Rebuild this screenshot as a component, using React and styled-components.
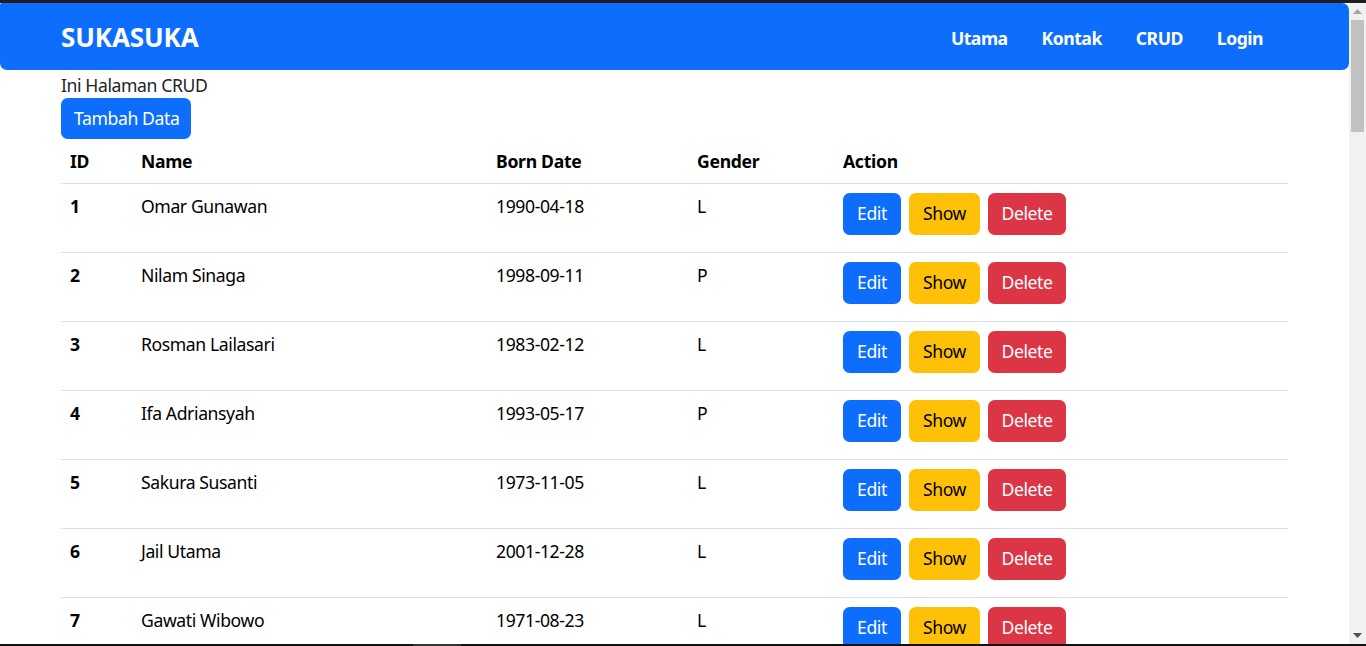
import React from "react";
import styled, { createGlobalStyle } from "styled-components";

const GlobalStyle = createGlobalStyle`
  html, body { margin: 0; padding: 0; }
  body {
    background: #141414;
    font-family: "Noto Sans", "Open Sans", sans-serif;
    overflow: hidden;
  }
  * { box-sizing: border-box; }
`;

const Frame = styled.div`
  width: 1366px;
  height: 646px;
  display: flex;
  flex-direction: column;
  background: #141414;
`;

const TopEdge = styled.div`
  height: 3px;
  background: #1e1e1e;
  flex: none;
`;

const Middle = styled.div`
  display: flex;
  height: 641px;
  flex: none;
`;

const Viewport = styled.div`
  flex: 1;
  background: #fff;
  overflow: hidden;
  color: #212529;
  font-size: 17.6px;
  line-height: 1.5;
`;

const ScrollTrack = styled.div`
  width: 17px;
  background: #f1f1f1;
  display: flex;
  flex-direction: column;
  align-items: center;
`;

const Arrow = styled.div`
  width: 17px;
  height: 17px;
  display: flex;
  align-items: center;
  justify-content: center;
  flex: none;
`;

const Thumb = styled.div`
  width: 13px;
  height: 112px;
  background: #c1c1c1;
  flex: none;
`;

const Spacer = styled.div`
  flex: 1;
`;

const BottomEdge = styled.div`
  height: 2px;
  background: #111;
  display: flex;
  flex: none;
`;

const EdgeSegment = styled.div`
  margin-left: 413px;
  width: 48px;
  background: #353535;
`;

const Navbar = styled.nav`
  height: 67px;
  background: #0d6efd;
  border-radius: 2px 7px 7px 7px;
  display: flex;
  align-items: center;
  justify-content: space-between;
  padding: 3px 86px 0 61px;
`;

const Brand = styled.a`
  color: #fff;
  font-weight: 700;
  font-size: 26px;
  letter-spacing: -0.1px;
  text-decoration: none;
  line-height: 1;
  margin-top: -2px;
`;

const NavList = styled.div`
  display: flex;
  gap: 34px;
`;

const NavLink = styled.a`
  color: #fff;
  font-weight: 700;
  font-size: 17.6px;
  text-decoration: none;
  letter-spacing: -0.5px;
`;

const Content = styled.main`
  padding: 3px 0 0 61px;
`;

const Intro = styled.p`
  margin: 0;
  line-height: 25px;
  letter-spacing: -0.4px;
`;

const Button = styled.button`
  font-family: inherit;
  font-size: 17.6px;
  line-height: 1;
  height: 42px;
  min-width: ${(p) => p.$w || 0}px;
  padding: 0 13px;
  border: none;
  border-radius: 6.6px;
  letter-spacing: -0.4px;
  white-space: nowrap;
  cursor: pointer;
  background: ${(p) =>
    p.$variant === "warning" ? "#ffc107" : p.$variant === "danger" ? "#dc3545" : "#0d6efd"};
  color: ${(p) => (p.$variant === "warning" ? "#000" : "#fff")};
`;

const AddButton = styled(Button)`
  height: 41px;
  width: 130px;
`;

const Table = styled.table`
  width: 1227px;
  margin-top: 1px;
  border-collapse: collapse;
  color: #000;
  table-layout: fixed;
`;

const HeadCell = styled.th`
  text-align: left;
  font-weight: 700;
  padding: 8px 9px 9px;
  line-height: 26px;
  border-bottom: 1px solid #dee2e6;
  width: ${(p) => p.$w}px;
  letter-spacing: -0.3px;
`;

const Row = styled.tr`
  border-bottom: 1px solid #dee2e6;
`;

const Cell = styled.td`
  padding: 9px 9px 17px;
  vertical-align: top;
  line-height: 26px;
  font-weight: ${(p) => (p.$bold ? 700 : 400)};
  letter-spacing: -0.4px;
`;

const Actions = styled.div`
  display: flex;
  gap: 8px;
`;

const rows = [
  [1, "Omar Gunawan", "1990-04-18", "L"],
  [2, "Nilam Sinaga", "1998-09-11", "P"],
  [3, "Rosman Lailasari", "1983-02-12", "L"],
  [4, "Ifa Adriansyah", "1993-05-17", "P"],
  [5, "Sakura Susanti", "1973-11-05", "L"],
  [6, "Jail Utama", "2001-12-28", "L"],
  [7, "Gawati Wibowo", "1971-08-23", "L"],
];

export default function App() {
  return (
    <Frame>
      <GlobalStyle />
      <TopEdge />
      <Middle>
        <Viewport>
          <Navbar>
            <Brand href="#">SUKASUKA</Brand>
            <NavList>
              <NavLink href="#">Utama</NavLink>
              <NavLink href="#">Kontak</NavLink>
              <NavLink href="#">CRUD</NavLink>
              <NavLink href="#">Login</NavLink>
            </NavList>
          </Navbar>
          <Content>
            <Intro>Ini Halaman CRUD</Intro>
            <AddButton>Tambah Data</AddButton>
            <Table>
              <thead>
                <tr>
                  <HeadCell $w={71}>ID</HeadCell>
                  <HeadCell $w={355}>Name</HeadCell>
                  <HeadCell $w={201}>Born Date</HeadCell>
                  <HeadCell $w={146}>Gender</HeadCell>
                  <HeadCell $w={454}>Action</HeadCell>
                </tr>
              </thead>
              <tbody>
                {rows.map(([id, name, date, g]) => (
                  <Row key={id}>
                    <Cell $bold>{id}</Cell>
                    <Cell>{name}</Cell>
                    <Cell>{date}</Cell>
                    <Cell>{g}</Cell>
                    <Cell>
                      <Actions>
                        <Button $w={58}>Edit</Button>
                        <Button $w={71} $variant="warning">Show</Button>
                        <Button $w={78} $variant="danger">Delete</Button>
                      </Actions>
                    </Cell>
                  </Row>
                ))}
              </tbody>
            </Table>
          </Content>
        </Viewport>
        <ScrollTrack>
          <Arrow>
            <svg width="9" height="5" viewBox="0 0 9 5"><path d="M0 5 L4.5 0 L9 5 Z" fill="#a3a3a3" /></svg>
          </Arrow>
          <Thumb />
          <Spacer />
          <Arrow>
            <svg width="9" height="5" viewBox="0 0 9 5"><path d="M0 0 L4.5 5 L9 0 Z" fill="#505050" /></svg>
          </Arrow>
        </ScrollTrack>
      </Middle>
      <BottomEdge>
        <EdgeSegment />
      </BottomEdge>
    </Frame>
  );
}
